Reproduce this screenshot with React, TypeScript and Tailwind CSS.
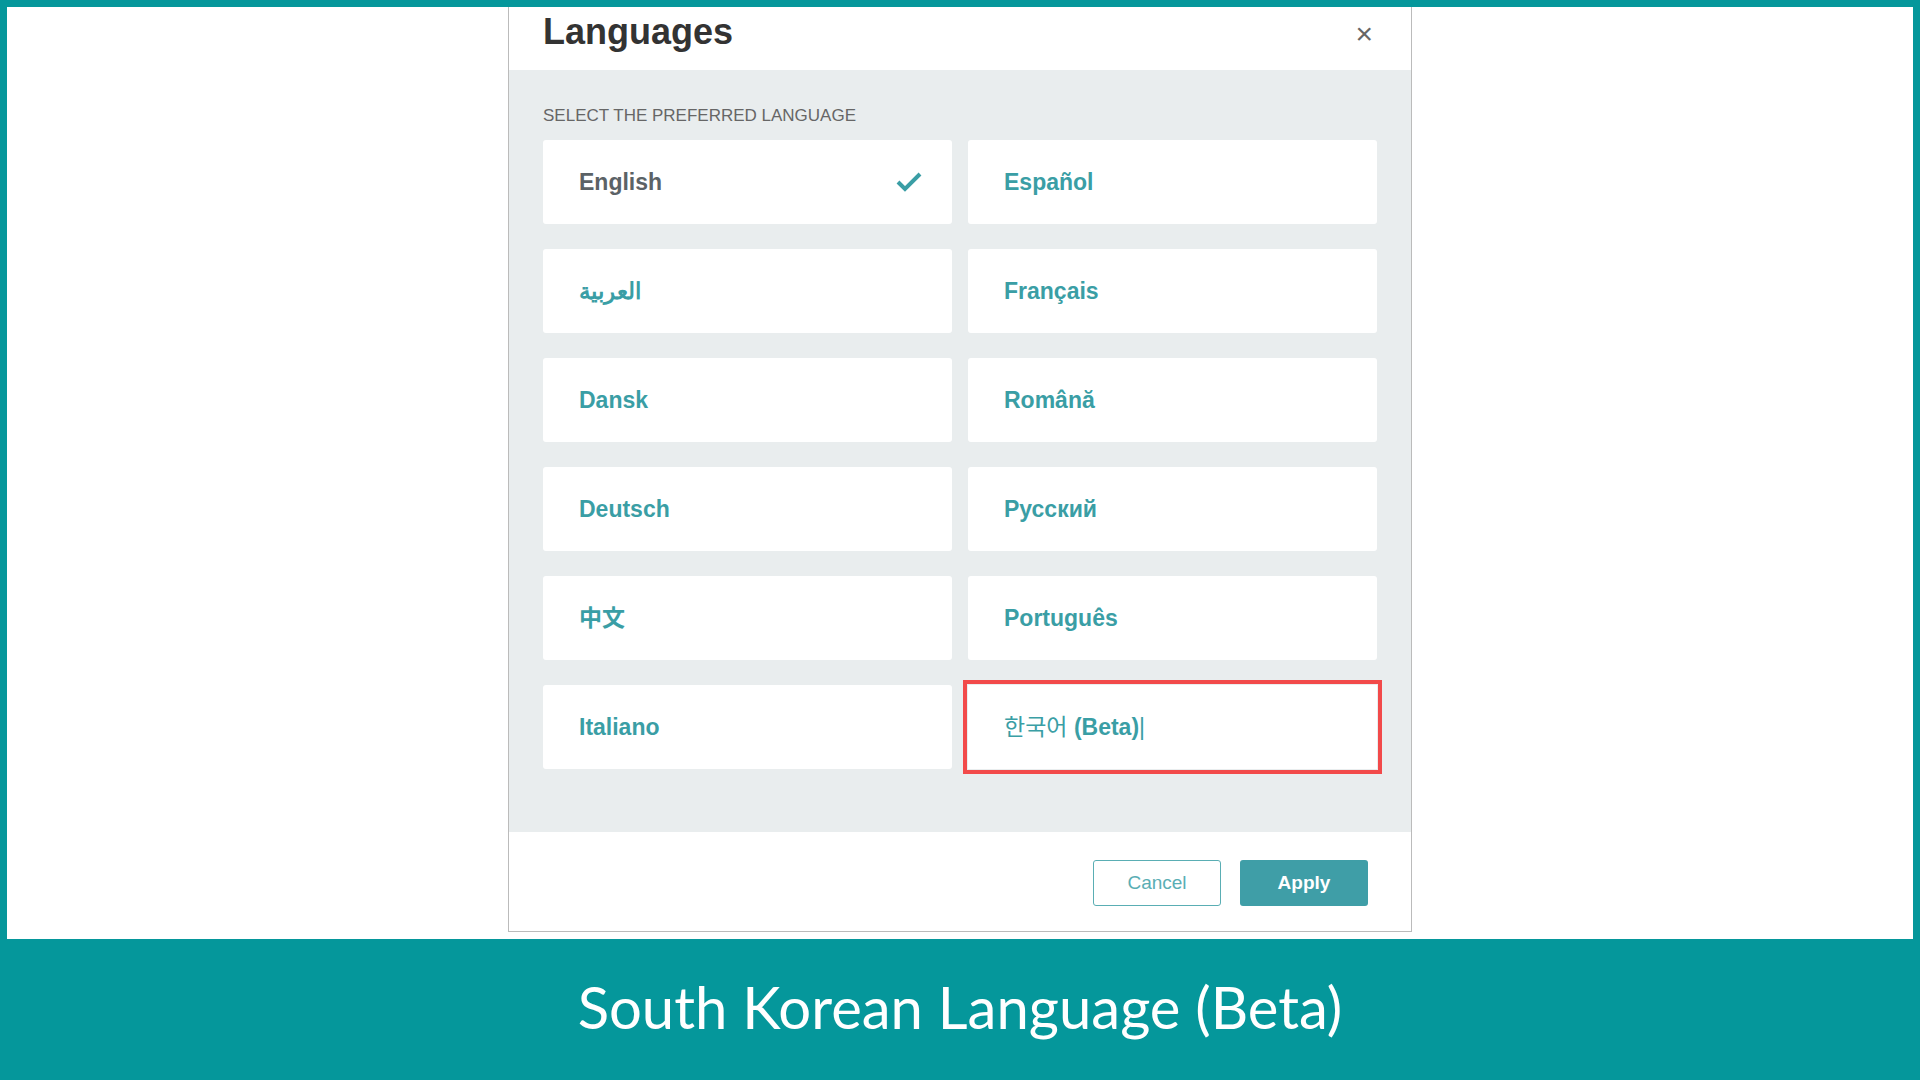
import React from "react";

const langs: [string, string][] = [
  ["English", "Español"],
  ["العربية", "Français"],
  ["Dansk", "Română"],
  ["Deutsch", "Русский"],
  ["中文", "Português"],
  ["Italiano", "한국어 (Beta)"],
];

export default function App() {
  const font = { fontFamily: '"Liberation Sans", Arial, "Noto Sans CJK KR", sans-serif' };
  return (
    <div className="w-[1920px] h-[1080px] flex flex-col bg-[#05979b] overflow-hidden" style={font}>
      <div className="h-[932px] mx-[7px] mt-[7px] bg-white flex justify-center">
        <div className="w-[904px] h-[925px] border-x border-b border-[#bbb] flex flex-col">
          <div className="h-[63px] flex items-center justify-between pl-[34px] pr-[38px] bg-white">
            <span className="text-[36px] font-bold text-[#333] -mt-[14px]">Languages</span>
            <span className="text-[30px] text-[#666] -mt-[10px]">×</span>
          </div>
          <div className="flex-1 bg-[#e9edee] px-[34px] pt-[36px]">
            <div className="text-[17px] text-[#666] mb-[14px] leading-[20px]">SELECT THE PREFERRED LANGUAGE</div>
            <div className="grid grid-cols-2 gap-x-[16px] gap-y-[25px]">
              {langs.flat().map((l, i) => {
                const korean = i === 11;
                const english = i === 0;
                return (
                  <div
                    key={l}
                    className={
                      "h-[84px] bg-white rounded-[3px] flex items-center justify-between pl-[36px] pr-[30px] " +
                      (korean ? "outline outline-[4px] outline-[#f24a4a] outline-offset-[1px] rounded-none" : "")
                    }
                  >
                    <span className={"text-[23px] font-bold " + (english ? "text-[#5b6266]" : "text-[#3a9ea5]")}>
                      {korean ? (
                        <>
                          <span className="font-normal">한국어</span>{"  "}(Beta)<span className="font-normal">|</span>
                        </>
                      ) : (
                        l
                      )}
                    </span>
                    {english && (
                      <svg width="26" height="22" viewBox="0 0 26 22">
                        <path d="M2 11 L9 18 L24 3" fill="none" stroke="#3a9ea5" strokeWidth="4" />
                      </svg>
                    )}
                  </div>
                );
              })}
            </div>
          </div>
          <div className="h-[99px] bg-white flex items-center justify-end gap-[19px] pr-[43px] pt-[3px]">
            <button className="w-[128px] h-[46px] border border-[#5aaeb4] rounded-[3px] text-[19px] text-[#5aaeb4] bg-white">Cancel</button>
            <button className="w-[128px] h-[46px] rounded-[3px] text-[19px] font-bold text-white bg-[#3f9ea7]">Apply</button>
          </div>
        </div>
      </div>
      <div className="flex-1 flex items-center justify-center text-white text-[58px] pb-[6px]" style={{ fontFamily: "Lato, sans-serif" }}>
        South Korean Language (Beta)
      </div>
    </div>
  );
}
